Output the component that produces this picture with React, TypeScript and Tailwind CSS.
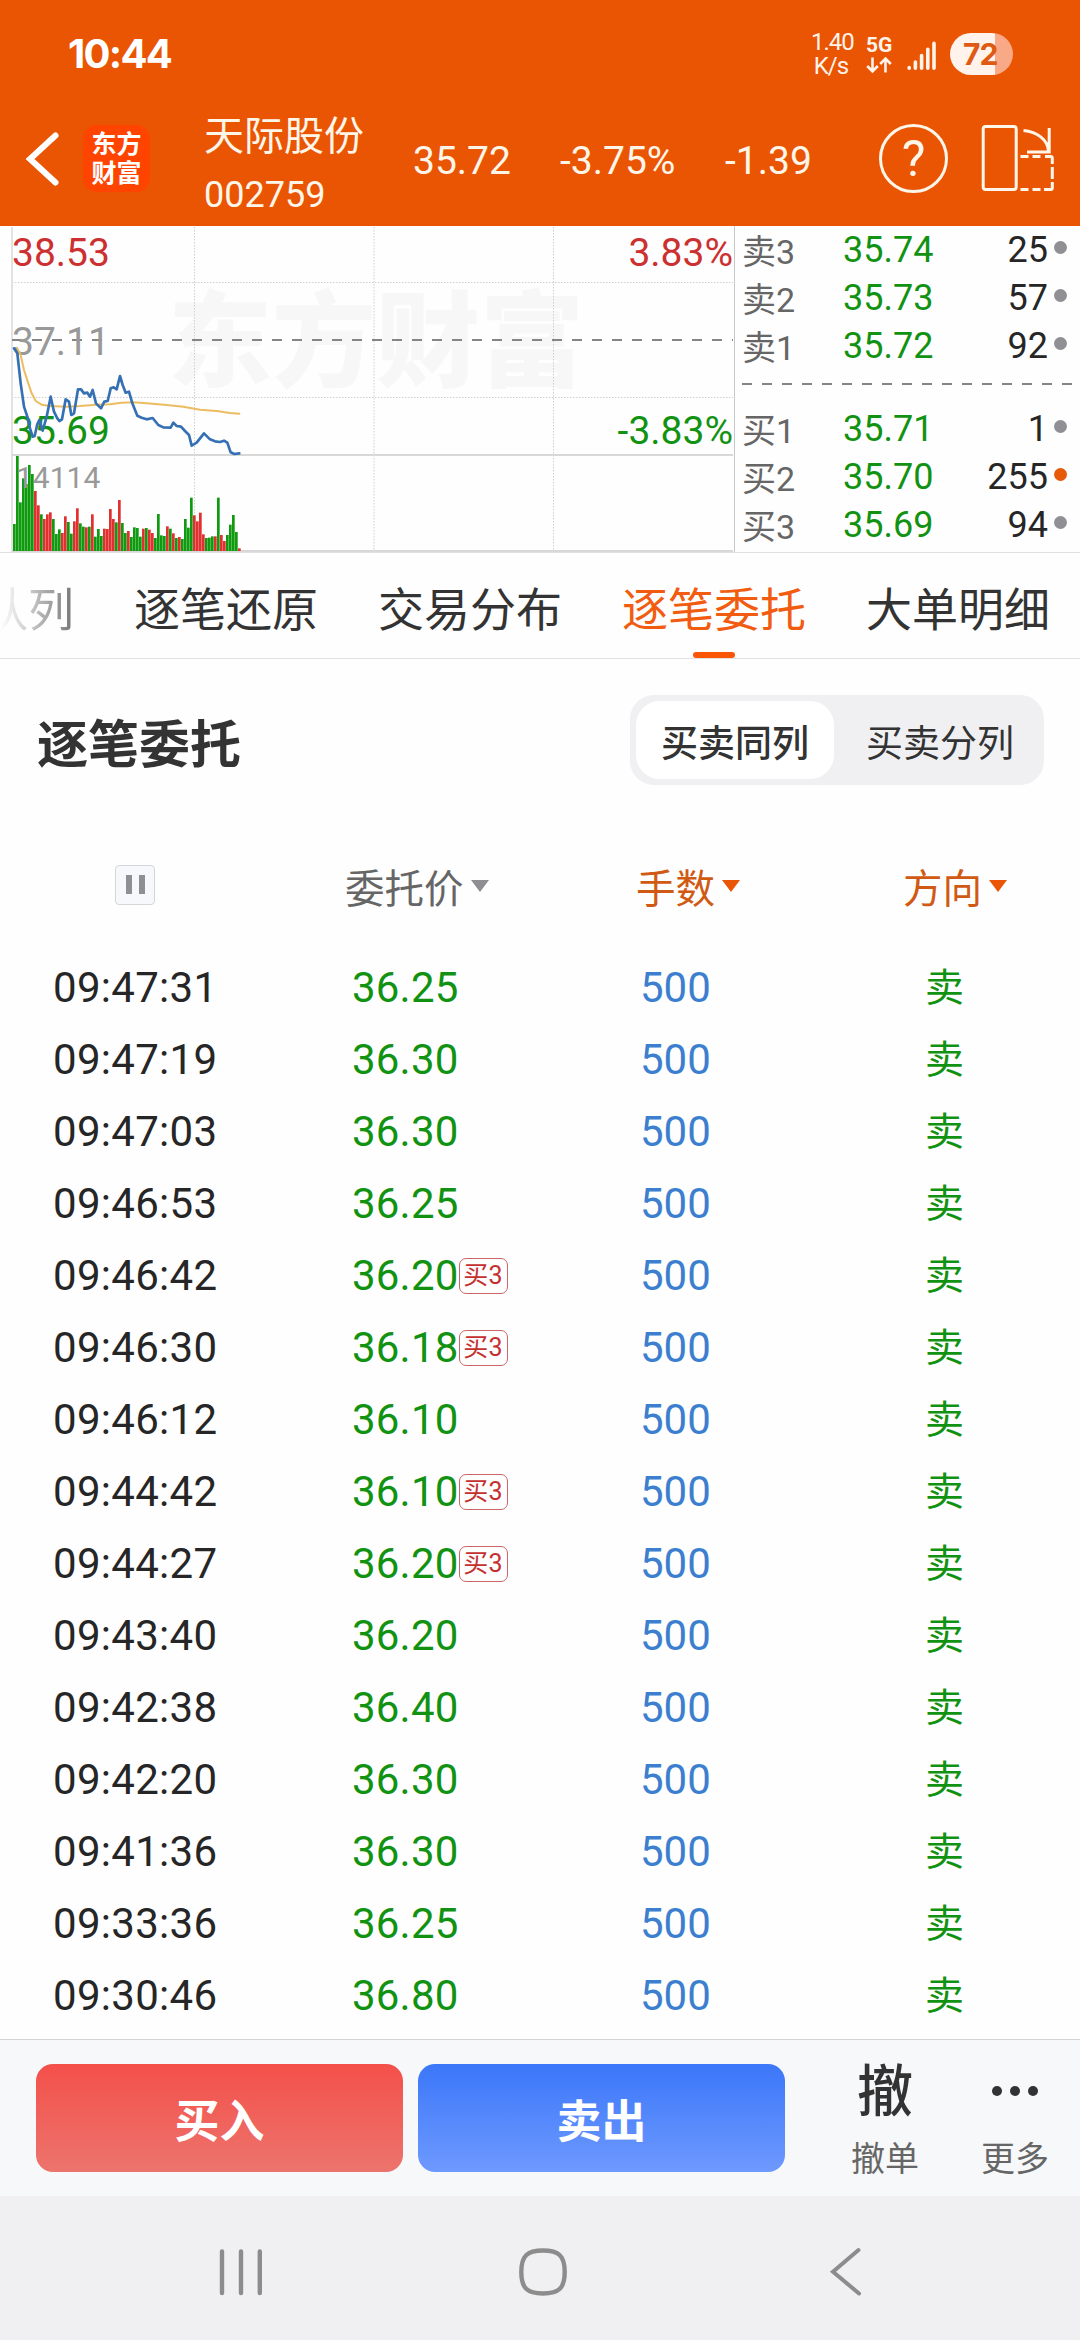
import React from 'react';

const PRICE_LINE =
  '42,385 52,400 62,490 72,560 82,590 90,625 98,650 104,648 112,612 118,600 128,632 140,590 152,530 162,575 172,595 178,603 186,598 197,538 207,545 214,585 222,580 234,508 243,508 252,520 262,518 270,530 278,510 288,550 303,565 313,545 323,543 332,505 341,502 350,508 360,468 368,495 377,518 387,515 397,550 412,587 425,593 440,598 458,594 475,615 490,622 512,623 520,608 530,618 543,620 555,633 567,645 575,677 590,668 612,640 630,658 645,664 660,666 672,662 682,668 692,697 703,702 718,700';
const AVERAGE_LINE =
  '52,385 62,405 72,450 85,490 95,520 107,543 125,554 150,558 200,560 240,558 290,554 330,553 365,548 400,547 440,550 500,555 550,560 600,569 650,573 690,579 718,581';

// Volume bar heights in thirds of a pixel, one per minute; negative marks a rising (red) minute.
const VOLUME = [
  81, 285, 146, 218, 201, 258, 231, -180, -137, 110, -96, -110, -116, 96, 51, 65, -54, -104, 87, 52,
  -89, -128, 83, 73, -71, 73, -110, 43, 66, 45, -67, -66, -126, -96, 86, -153, 84, 54, -60, 42,
  71, 69, 43, -67, 69, -64, -54, 39, 111, 47, 45, -74, 67, -53, 39, -42, 36, 96, 70, 160,
  -107, -89, -115, -50, 39, 40, 44, -44, 160, -48, -30, 48, 79, 108, 57, -8,
];

type Level = { label: string; price: string; qty: string; hot?: boolean };
const ASKS: Level[] = [
  { label: '卖3', price: '35.74', qty: '25' },
  { label: '卖2', price: '35.73', qty: '57' },
  { label: '卖1', price: '35.72', qty: '92' },
];
const BIDS: Level[] = [
  { label: '买1', price: '35.71', qty: '1' },
  { label: '买2', price: '35.70', qty: '255', hot: true },
  { label: '买3', price: '35.69', qty: '94' },
];

const ORDERS: [string, string, boolean][] = [
  ['09:47:31', '36.25', false],
  ['09:47:19', '36.30', false],
  ['09:47:03', '36.30', false],
  ['09:46:53', '36.25', false],
  ['09:46:42', '36.20', true],
  ['09:46:30', '36.18', true],
  ['09:46:12', '36.10', false],
  ['09:44:42', '36.10', true],
  ['09:44:27', '36.20', true],
  ['09:43:40', '36.20', false],
  ['09:42:38', '36.40', false],
  ['09:42:20', '36.30', false],
  ['09:41:36', '36.30', false],
  ['09:33:36', '36.25', false],
  ['09:30:46', '36.80', false],
];

function StatusBar() {
  return (
    <div className="flex h-[92px] items-start text-white">
      <div className="ml-[68px] mt-[34px] font-['Inter'] text-[40px] font-bold leading-[40px] tracking-[-1.7px]">10:44</div>
      <div className="ml-auto flex text-[#fff3ea]">
        <div className="mt-[30px] w-[42px] pl-[2px] text-center text-[24px] leading-[24px] tracking-[-1px]">
          <div>1.40</div>
          <div>K/s</div>
        </div>
        <div className="ml-[15px] mt-[36px] w-[26px]">
          <div className="text-center text-[21px] font-bold leading-[19px]">5G</div>
          <svg className="mt-[1px] block" width="26" height="18" viewBox="0 0 26 18" fill="none" stroke="#fff3ea" strokeWidth="2.6">
            <path d="M6.5 1.5V15M1.2 10l5.3 5.3 5.3-5.3M19.5 16.5V3M14.2 8l5.3-5.3L24.8 8" />
          </svg>
        </div>
        <svg className="ml-[15px] mt-[40px] block" width="30" height="32" viewBox="0 0 30 32" stroke="#fff3ea" strokeWidth="3.6" strokeLinecap="round">
          <path d="M2.2 27.6v.6M8.4 22v6.2M14.6 15.6v12.6M20.8 9.2v19M27 3.4v24.8" />
        </svg>
        <div className="ml-[13px] mr-[67px] mt-[33px] flex h-[42px] w-[63px] items-center overflow-hidden rounded-full bg-[linear-gradient(to_right,#fff3ec_0_45px,#f9a985_45px)]">
          <span className="ml-[13px] font-['Inter'] text-[30px] font-bold leading-[42px] tracking-[-1px] text-[#df5a12]">72</span>
        </div>
      </div>
    </div>
  );
}

function TitleBar() {
  return (
    <div className="flex h-[134px] items-start text-[#fff6ea]">
      <svg className="ml-[24px] mt-[38px] block" width="38" height="58" viewBox="0 0 38 58" fill="none" stroke="#fff" strokeWidth="6" strokeLinecap="round">
        <path d="M31.5 5.5L6 29L31.5 52.5" />
      </svg>
      <div className="ml-[21px] mt-[33px] flex h-[67px] w-[67px] flex-col items-center justify-center rounded-[14px] bg-[#ff4400] text-[25px] font-bold leading-[29px] text-white">
        <span>东方</span>
        <span>财富</span>
      </div>
      <div className="ml-[54px] mt-[20px] w-[176px]">
        <div className="text-[40px] leading-[50px]">天际股份</div>
        <div className="mt-[8px] text-[36px] leading-[50px]">002759</div>
      </div>
      <div className="ml-[33px] mt-[44px] flex text-[39px] leading-[50px]">
        <span className="w-[147px]">35.72</span>
        <span className="w-[165px]">-3.75%</span>
        <span className="w-[154px]">-1.39</span>
      </div>
      <div className="mt-[32px] flex h-[69px] w-[69px] shrink-0 items-center justify-center rounded-full border-[3px] border-[#fff6ea] text-[50px] leading-[60px]">
        ?
      </div>
      <svg className="ml-[32px] mt-[31px] block shrink-0" width="76" height="70" viewBox="0 0 76 70" fill="none" stroke="#fff6ea" strokeWidth="3">
        <rect x="3.2" y="3.5" width="33" height="63" rx="2.5" />
        <path d="M43.5 7.5C57 9 67.5 16 68.5 28M69.2 5v24H47" />
        <path d="M40.5 33.5h8M52.500 33.500h8M65 33.500h5.500q1.800 0 1.800 1.800V41M72.300 44v12M72.300 59v6q0 1.500-1.500 1.500H64M60.500 66.500h-8M48.500 66.500h-8" />
      </svg>
    </div>
  );
}

function Chart() {
  return (
    <div className="relative h-[327px] w-[734px] overflow-hidden">
      <div className="absolute left-[168px] top-[57px] text-[104px] font-black leading-[122px] text-[#f7f7f7]">东方财富</div>
      <svg className="absolute left-0 top-0" width="734" height="327" viewBox="0 0 734 327" fill="none">
        <g stroke="#cfcfcf" strokeDasharray="1.5 1.5" strokeWidth="1">
          <path d="M12 56.500H733M12 171.500H733M194.500 1V325M553.500 1V325" />
          <path d="M374 1V325" stroke="#e6e6e6" strokeWidth="2" />
        </g>
        <path d="M12 1V326" stroke="#e2e2e2" strokeWidth="2" />
        <path d="M12 114H733" stroke="#858585" strokeWidth="2" strokeDasharray="10 10" />
        <path d="M12 229H733M12 325H733" stroke="#d8d8d8" strokeWidth="2" />
        {VOLUME.map((v, i) => (
          <rect
            key={i}
            x={13 + i * 3}
            y={325 - Math.abs(v) / 3}
            width="2.7"
            height={Math.abs(v) / 3}
            fill={v < 0 ? '#e03030' : '#109a10'}
          />
        ))}
      </svg>
      <div className="absolute left-[12px] top-[2px] text-[39px] leading-[50px] text-[#cc3030]">38.53</div>
      <div className="absolute left-[12px] top-[91px] text-[39px] leading-[50px] text-[#999]">37.11</div>
      <div className="absolute left-[12px] top-[180px] text-[39px] leading-[50px] text-[#129212]">35.69</div>
      <div className="absolute left-[16px] top-[232px] text-[30px] leading-[40px] text-[#999]">14114</div>
      <div className="absolute right-[1px] top-[2px] text-[39px] leading-[50px] text-[#cc3030]">3.83%</div>
      <div className="absolute right-[1px] top-[180px] text-[39px] leading-[50px] text-[#129212]">-3.83%</div>
      <svg className="absolute left-0 top-0" width="734" height="327" viewBox="0 18 2202 981" fill="none" strokeLinejoin="round" strokeLinecap="round">
        <polyline points={AVERAGE_LINE} stroke="#ecbd60" strokeWidth="6" />
        <polyline points={PRICE_LINE} stroke="#3570b4" strokeWidth="8" />
      </svg>
    </div>
  );
}

function LevelRow({ level }: { level: Level }) {
  return (
    <div className="flex h-[48px] items-center leading-[48px]">
      <span className="w-[101px] pt-[3px] text-[34px] text-[#666]">{level.label}</span>
      <span className="w-[100px] text-[36px] text-[#129212]">{level.price}</span>
      <span className="w-[105px] text-right text-[36px] text-[#262626]">{level.qty}</span>
      <span className={`mb-[5px] ml-[6px] h-[13px] w-[13px] rounded-full ${level.hot ? 'bg-[#e65a08]' : 'bg-[#909094]'}`} />
    </div>
  );
}

function OrderBook() {
  return (
    <div className="h-[326px] flex-1 pl-[7px]">
      {ASKS.map((l) => (
        <LevelRow key={l.label} level={l} />
      ))}
      <div className="mb-[20px] mt-[13px] h-[2px] w-[330px] bg-[repeating-linear-gradient(to_right,#858585_0_10px,transparent_10px_20px)]" />
      {BIDS.map((l) => (
        <LevelRow key={l.label} level={l} />
      ))}
    </div>
  );
}

function Tabs() {
  return (
    <div className="flex h-[106px] gap-[60px] overflow-hidden border-b border-[#e2e2e2] text-[46px] leading-[114px] text-[#333]">
      <span className="-ml-[18px] w-[92px] shrink-0 bg-[linear-gradient(to_right,#fff_18px,#777_92px)] bg-clip-text text-transparent">队列</span>
      <span className="w-[184px] shrink-0">逐笔还原</span>
      <span className="w-[184px] shrink-0">交易分布</span>
      <span className="flex h-[105px] w-[184px] shrink-0 flex-col items-center justify-between text-[#f25c10]">
        <span className="h-[98px]">逐笔委托</span>
        <span className="h-[6px] w-[42px] rounded-full bg-[#fb5608]" />
      </span>
      <span className="w-[184px] shrink-0">大单明细</span>
    </div>
  );
}

function SortMark({ className }: { className: string }) {
  return (
    <svg className={`mb-[7px] ml-[7px] ${className}`} width="18" height="12" viewBox="0 0 18 12" fill="currentColor">
      <path d="M0 0H18L9 12Z" />
    </svg>
  );
}

export default function App() {
  return (
    <div className="h-[2340px] w-[1080px] overflow-hidden bg-[#fefefe] font-[Roboto,'Noto_Sans_CJK_SC',sans-serif] text-[#262626]">
      <header className="h-[226px] bg-[#ea5504]">
        <StatusBar />
        <TitleBar />
      </header>

      <section className="flex h-[327px] border-b border-[#e0e0e0]">
        <Chart />
        <div className="h-[326px] w-px bg-[#c8c8c8]" />
        <OrderBook />
      </section>

      <Tabs />

      <div className="flex h-[168px] items-center pl-[37px] pr-[36px] pt-[4px]">
        <h1 className="mt-[1px] text-[51px] font-bold leading-[60px] text-[#333]">逐笔委托</h1>
        <div className="ml-auto mt-[-10px] flex h-[90px] w-[414px] rounded-[24px] bg-[#f0f0f3] p-[6px] text-[37px] leading-[87px] text-[#333]">
          <span className="h-[78px] w-[198px] rounded-[24px] bg-white text-center font-medium">买卖同列</span>
          <span className="flex-1 pl-[8px] text-center">买卖分列</span>
        </div>
      </div>

      <div className="flex h-[125px] items-center text-[39.5px] leading-[60px] text-[#666]">
        <div className="mb-[10px] ml-[115px] flex h-[40px] w-[40px] items-center justify-center gap-[7px] rounded-[4px] border border-[#d4d7da] bg-[#f6f8fb]">
          <span className="h-[19px] w-[6px] bg-[#8e8e93]" />
          <span className="h-[19px] w-[6px] bg-[#8e8e93]" />
        </div>
        <div className="ml-[190px] flex w-[291px] items-center">
          委托价
          <SortMark className="text-[#8e8e93]" />
        </div>
        <div className="flex w-[267px] items-center text-[#d05a14]">
          手数
          <SortMark className="text-[#e95504]" />
        </div>
        <div className="flex items-center text-[#d05a14]">
          方向
          <SortMark className="text-[#e95504]" />
        </div>
      </div>

      <div className="h-[1087px]">
        {ORDERS.map(([time, price, tagged]) => (
          <div key={time} className="flex h-[72px] items-center pl-[53px] text-[42px] leading-[72px]">
            <span className="w-[299px] tracking-[0.3px]">{time}</span>
            <span className="flex w-[288px] items-center tracking-[0.2px] text-[#129212]">
              {price}
              {tagged && (
                <span className="flex h-[36px] w-[49px] items-center justify-center rounded-[7px] border border-[#cc6666] text-[25px] leading-[34px] text-[#c43030]">
                  买3
                </span>
              )}
            </span>
            <span className="w-[285px] text-[#3d7fcf]">500</span>
            <span className="text-[39px] text-[#129212]">卖</span>
          </div>
        ))}
      </div>

      <div className="flex h-[157px] border-t border-[#d2d6d3] bg-[#f7f8fa]">
        <button className="ml-[36px] mt-[24px] h-[108px] w-[367px] rounded-[17px] bg-[linear-gradient(to_bottom,#f4504a,#ec746d)] pt-[10px] text-[45px] font-bold leading-[98px] text-white">
          买入
        </button>
        <button className="ml-[15px] mt-[24px] h-[108px] w-[367px] rounded-[17px] bg-[linear-gradient(to_bottom,#3b77f9,#6e99fe)] pt-[10px] text-[45px] font-bold leading-[98px] text-white">
          卖出
        </button>
        <div className="ml-[50px] mt-[16px] flex w-[100px] flex-col items-center">
          <span className="text-[56px] font-medium leading-[72px] text-[#333]">撤</span>
          <span className="mt-[8px] text-[34px] leading-[46px] text-[#666]">撤单</span>
        </div>
        <div className="ml-[30px] mt-[15px] flex w-[100px] flex-col items-center">
          <span className="flex h-[72px] items-center gap-[8px]">
            <i className="h-[10px] w-[10px] rounded-full bg-[#333]" />
            <i className="h-[10px] w-[10px] rounded-full bg-[#333]" />
            <i className="h-[10px] w-[10px] rounded-full bg-[#333]" />
          </span>
          <span className="mt-[9px] text-[34px] leading-[46px] text-[#666]">更多</span>
        </div>
      </div>

      <nav className="flex h-[144px] items-start bg-[#f0f0f2] pt-[50px]">
        <svg className="ml-[216px] block" width="50" height="52" viewBox="0 0 50 52" stroke="#8c8c8c" strokeWidth="4.400" strokeLinecap="round">
          <path d="M6 5.500V47M25 5.500V47M43.800 5.500V47" />
        </svg>
        <svg className="ml-[251px] block" width="52" height="52" viewBox="0 0 52 52" fill="none" stroke="#8c8c8c" strokeWidth="4.400">
          <path d="M26 4.500C42 4.500 47.700 10 47.700 26S42 47.500 26 47.500S4.300 42 4.300 26S10 4.500 26 4.500Z" />
        </svg>
        <svg className="ml-[259px] block" width="38" height="52" viewBox="0 0 38 52" fill="none" stroke="#8c8c8c" strokeWidth="4" strokeLinecap="round">
          <path d="M30.500 4L5 25.700L31 47.500" />
        </svg>
      </nav>
    </div>
  );
}
